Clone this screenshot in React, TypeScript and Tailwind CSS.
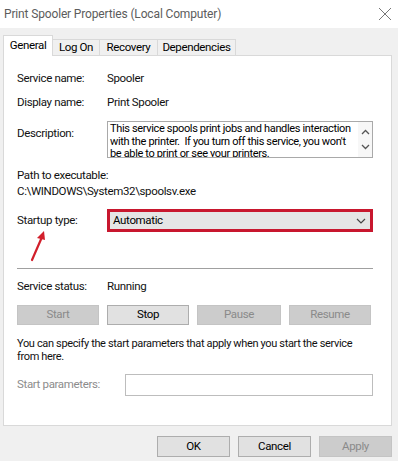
import React from "react";

const font = { fontFamily: 'Roboto, "Liberation Sans", Arial, sans-serif' };

const tabs = [
  { label: "General", w: "w-[50px]", active: true },
  { label: "Log On", w: "w-[47px]" },
  { label: "Recovery", w: "w-[58px]" },
  { label: "Dependencies", w: "w-[78px]" },
];

const WinButton: React.FC<{ label: string; disabled?: boolean; className?: string }> = ({
  label,
  disabled,
  className = "",
}) => (
  <div
    className={`flex items-center justify-center border text-[11.5px] tracking-[-0.35px] ${
      disabled
        ? "bg-[#cccccc] border-[#c4c4c4] text-[#8a8a8a]"
        : "bg-[#e1e1e1] border-[#adadad] text-black"
    } ${className}`}
  >
    {label}
  </div>
);

const App: React.FC = () => {
  return (
    <div className="w-[398px] h-[461px] bg-[#f0f0f0] overflow-hidden flex flex-col" style={font}>
      {/* Title bar */}
      <div className="h-[28px] bg-white flex items-center justify-between pl-[4px] pr-[6px] shrink-0">
        <span className="text-[12px] tracking-[-0.15px] text-[#5c5c5c]">Print Spooler Properties (Local Computer)</span>
        <svg width="14" height="14" viewBox="0 0 14 14" className="mb-[1px]">
          <path d="M1 1L13 13M13 1L1 13" stroke="#777" strokeWidth="1" />
        </svg>
      </div>

      {/* Tabs */}
      <div className="flex items-end h-[27px] pl-[3px] shrink-0 tracking-[-0.35px]">
        {tabs.map((t) =>
          t.active ? (
            <div
              key={t.label}
              className={`${t.w} h-[21px] bg-white border border-b-0 border-[#d9d9d9] text-[11.5px] text-black flex items-center justify-center relative -mb-[1px] z-10 pb-[1px]`}
            >
              {t.label}
            </div>
          ) : (
            <div
              key={t.label}
              className={`${t.w} h-[16px] bg-[#f0f0f0] border border-b-0 border-l-0 border-[#d9d9d9] text-[11.5px] text-black flex items-center justify-center`}
            >
              {t.label}
            </div>
          )
        )}
      </div>

      {/* Panel */}
      <div className="relative ml-[3px] w-[389px] h-[371px] bg-white border border-[#d9d9d9] pl-[13px] pr-[18px] pt-[15px] text-[11.5px] tracking-[-0.35px] text-[#111] shrink-0">
        <div className="flex h-[16px] items-center">
          <span className="w-[90px]">Service name:</span>
          <span>Spooler</span>
        </div>
        <div className="flex h-[16px] items-center mt-[8px]">
          <span className="w-[90px]">Display name:</span>
          <span>Print Spooler</span>
        </div>
        <div className="flex mt-[10px]">
          <span className="w-[90px] mt-[4px]">Description:</span>
          <div className="w-[266px] h-[37px] border border-[#a9a9a9] flex overflow-hidden">
            <div className="flex-1 pl-[2px] pt-[1px] leading-[12.5px] text-[11px] text-black whitespace-nowrap overflow-hidden">
              This service spools print jobs and handles interaction
              <br />
              with the printer.&nbsp; If you turn off this service, you won't
              <br />
              be able to print or see your printers.
            </div>
            <div className="w-[14px] flex flex-col items-center justify-between py-[7px] bg-[#f7f7f7]">
              <svg width="9" height="6" viewBox="0 0 9 6">
                <path d="M1 5L4.5 1.5L8 5" stroke="#555" strokeWidth="1.3" fill="none" />
              </svg>
              <svg width="9" height="6" viewBox="0 0 9 6">
                <path d="M1 1L4.5 4.5L8 1" stroke="#555" strokeWidth="1.3" fill="none" />
              </svg>
            </div>
          </div>
        </div>

        <div className="mt-[10px] h-[16px] flex items-center">Path to executable:</div>
        <div className="h-[16px] flex items-center">C:\WINDOWS\System32\spoolsv.exe</div>

        <div className="flex items-center mt-[9px]">
          <span className="w-[90px]">Startup type:</span>
          <div className="w-[266px] h-[23px] border-[3px] border-[#c8172e] bg-[#e5e5e5] flex items-center justify-between pl-[3px] pr-[4px]">
            <span className="text-black">Automatic</span>
            <svg width="10" height="6" viewBox="0 0 10 6">
              <path d="M1 1L5 5L9 1" stroke="#444" strokeWidth="1.2" fill="none" />
            </svg>
          </div>
        </div>

        {/* Red arrow */}
        <svg className="absolute left-[22px] top-[172px]" width="24" height="34" viewBox="0 0 24 34">
          <path d="M6 32L16 9" stroke="#d21f2b" strokeWidth="2.2" strokeLinecap="round" />
          <path d="M18 3L11 10L19 12Z" fill="#d21f2b" />
        </svg>

        <div className="mt-[36px] h-[1px] bg-[#a0a0a0] w-[356px]" />

        <div className="flex h-[16px] items-center mt-[10px]">
          <span className="w-[90px]">Service status:</span>
          <span>Running</span>
        </div>

        <div className="flex gap-[8px] mt-[10px]">
          <WinButton label="Start" disabled className="w-[82px] h-[20px]" />
          <WinButton label="Stop" className="w-[82px] h-[20px]" />
          <WinButton label="Pause" disabled className="w-[84px] h-[20px]" />
          <WinButton label="Resume" disabled className="w-[82px] h-[20px]" />
        </div>

        <p className="mt-[12px] leading-[13px] text-[11px] whitespace-nowrap">
          You can specify the start parameters that apply when you start the service
          <br />
          from here.
        </p>

        <div className="flex items-center mt-[11px]">
          <span className="w-[108px] text-[#8c8c8c]">Start parameters:</span>
          <div className="w-[248px] h-[22px] border border-[#bdbdbd] bg-white" />
        </div>
      </div>

      {/* Footer buttons */}
      <div className="flex justify-end gap-[8px] pr-[6px] mt-[10px]">
        <WinButton label="OK" className="w-[73px] h-[21px]" />
        <WinButton label="Cancel" className="w-[73px] h-[21px]" />
        <WinButton label="Apply" disabled className="w-[73px] h-[21px]" />
      </div>
    </div>
  );
};

export default App;
